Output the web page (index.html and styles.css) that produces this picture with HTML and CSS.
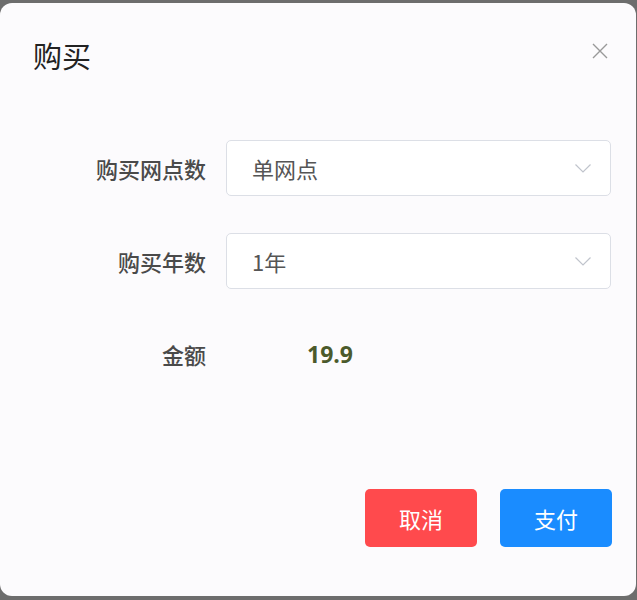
FILE: index.html
```html
<!DOCTYPE html>
<html lang="zh-CN">
<head>
  <meta charset="UTF-8" />
  <title>购买</title>
  <link rel="stylesheet" href="styles.css">
</head>
<body>
  <div class="dialog">
    <div class="dialog-header">
      <h2 class="dialog-title">购买</h2>
      <button class="dialog-close" aria-label="关闭">
        <svg width="16" height="16" viewBox="0 0 16 16"><path d="M1 1L15 15M15 1L1 15" stroke="#999" stroke-width="1.4" fill="none"/></svg>
      </button>
    </div>

    <div class="form">
      <label class="form-label">购买网点数</label>
      <div class="select">
        <span>单网点</span>
        <svg class="arrow" width="16" height="9" viewBox="0 0 16 9"><path d="M0.5 0.5L8 8L15.5 0.5" stroke="#c0c4cc" stroke-width="1.2" fill="none"/></svg>
      </div>

      <label class="form-label">购买年数</label>
      <div class="select">
        <span>1年</span>
        <svg class="arrow" width="16" height="9" viewBox="0 0 16 9"><path d="M0.5 0.5L8 8L15.5 0.5" stroke="#c0c4cc" stroke-width="1.2" fill="none"/></svg>
      </div>

      <label class="form-label">金额</label>
      <div class="amount">19.9</div>
    </div>

    <div class="dialog-footer">
      <button class="btn btn-cancel">取消</button>
      <button class="btn btn-pay">支付</button>
    </div>
  </div>
</body>
</html>
```

FILE: styles.css
```css
body {
  margin: 0;
  background: #6d6d6d;
  font-family: "Noto Sans CJK SC", "Noto Sans", sans-serif;
  height: 600px;
  overflow: hidden;
}

.dialog {
  margin-top: 3px;
  width: 636px;
  height: 593px;
  background: #fcfbfd;
  border-radius: 12px;
  box-sizing: border-box;
}

.dialog-header {
  display: flex;
  align-items: center;
  justify-content: space-between;
  padding: 32px 28px 0 33px;
}

.dialog-title {
  margin: 0;
  font-size: 29px;
  line-height: 40px;
  font-weight: normal;
  color: #222;
}

.dialog-close {
  border: none;
  background: none;
  padding: 0;
  margin-top: -8px;
  width: 16px;
  height: 16px;
  cursor: pointer;
}

.dialog-close svg {
  display: block;
}

.form {
  display: grid;
  grid-template-columns: 206px 1fr;
  column-gap: 20px;
  row-gap: 37px;
  grid-auto-rows: 56px;
  margin-top: 65px;
  padding-right: 25px;
}

.form-label {
  display: flex;
  align-items: center;
  justify-content: flex-end;
  font-size: 22px;
  font-weight: 500;
  color: #4a4a4a;
}

.select {
  display: flex;
  align-items: center;
  justify-content: space-between;
  padding: 0 19px 0 25px;
  border: 1px solid #dcdfe6;
  border-radius: 5px;
  background: #fff;
  font-size: 22px;
  color: #555;
}

.select .arrow {
  display: block;
}

.amount {
  display: flex;
  align-items: center;
  padding-left: 81px;
  font-family: "Open Sans", "Noto Sans", sans-serif;
  font-size: 23px;
  font-weight: 700;
  color: #4b5a2c;
}

.dialog-footer {
  display: flex;
  justify-content: flex-end;
  gap: 23px;
  margin-top: 107px;
  padding-right: 24px;
}

.btn {
  width: 112px;
  height: 58px;
  border: none;
  border-radius: 5px;
  color: #fff;
  font-family: inherit;
  font-size: 22px;
  cursor: pointer;
}

.btn-cancel {
  background: #ff4a4d;
}

.btn-pay {
  background: #1a8cff;
}
```
